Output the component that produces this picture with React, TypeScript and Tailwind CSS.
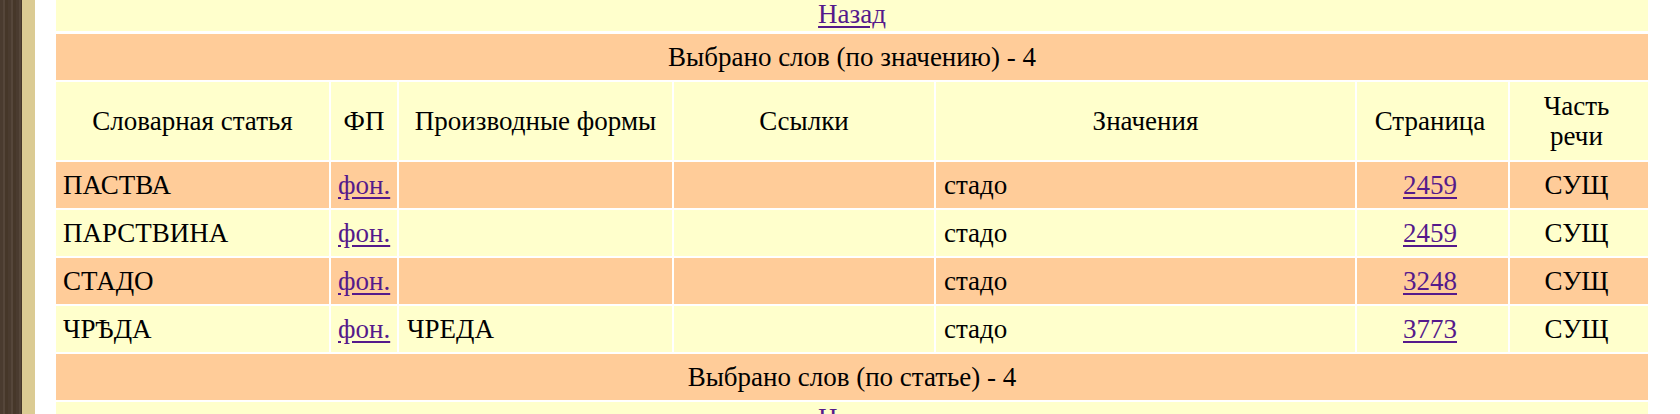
import React from "react";

const rows = [
  { word: "ПАСТВА", forms: "", page: "2459", bg: "bg-[#ffcc99]" },
  { word: "ПАРСТВИНА", forms: "", page: "2459", bg: "bg-[#ffffcc]" },
  { word: "СТАДО", forms: "", page: "3248", bg: "bg-[#ffcc99]" },
  { word: "ЧРѢДА", forms: "ЧРЕДА", page: "3773", bg: "bg-[#ffffcc]" },
];

const link = "text-[#551a8b] underline underline-offset-[3px]";

export default function App() {
  return (
    <div className="flex w-[1680px] h-[414px] overflow-hidden bg-white text-black text-[27px] leading-[30px] font-['Liberation_Serif','Times_New_Roman',serif]">
      <div className="w-[22px] shrink-0 bg-[#4b3c30] bg-[image:repeating-linear-gradient(90deg,#4a3b2f_0px,#4a3b2f_3px,#55463a_3px,#55463a_5px,#463729_5px,#463729_8px)]" />
      <div className="w-[13px] shrink-0 bg-[#dbcb93]" />
      <div className="w-[21px] shrink-0 bg-white" />
      <div className="w-[1592px] shrink-0 grid grid-cols-[273px_66px_273px_260px_419px_151px_138px] gap-[2px] content-start">
        <div className="col-span-7 h-[31px] mb-px bg-[#ffffcc] flex justify-center items-start leading-[29px]">
          <a href="#" className={link}>Назад</a>
        </div>
        <div className="col-span-7 h-[46px] bg-[#ffcc99] flex items-center justify-center">
          Выбрано слов (по значению) - 4
        </div>

        {["Словарная статья", "ФП", "Производные формы", "Ссылки", "Значения"].map((h) => (
          <div key={h} className="h-[78px] bg-[#ffffcc] flex items-center justify-center text-center">
            {h}
          </div>
        ))}
        <div className="h-[78px] bg-[#ffffcc] flex items-center justify-center text-center pr-[5px]">
          Страница
        </div>
        <div className="h-[78px] bg-[#ffffcc] flex items-center justify-center text-center pr-[5px]">
          Часть
          <br />
          речи
        </div>

        {rows.map((r) => (
          <React.Fragment key={r.word}>
            <div className={`h-[46px] ${r.bg} flex items-center px-[7px]`}>{r.word}</div>
            <div className={`h-[46px] ${r.bg} flex items-center px-[7px]`}>
              <a href="#" className={link}>фон.</a>
            </div>
            <div className={`h-[46px] ${r.bg} flex items-center px-[8px]`}>{r.forms}</div>
            <div className={`h-[46px] ${r.bg}`} />
            <div className={`h-[46px] ${r.bg} flex items-center px-[8px]`}>стадо</div>
            <div className={`h-[46px] ${r.bg} flex items-center justify-center pr-[5px]`}>
              <a href="#" className={link}>{r.page}</a>
            </div>
            <div className={`h-[46px] ${r.bg} flex items-center justify-center pr-[5px]`}>СУЩ</div>
          </React.Fragment>
        ))}

        <div className="col-span-7 h-[46px] bg-[#ffcc99] flex items-center justify-center">
          Выбрано слов (по статье) - 4
        </div>
        <div className="col-span-7 h-[31px] bg-[#ffffcc] flex justify-center items-start leading-[29px] pt-[2px]">
          <a href="#" className={link}>Назад</a>
        </div>
      </div>
    </div>
  );
}
